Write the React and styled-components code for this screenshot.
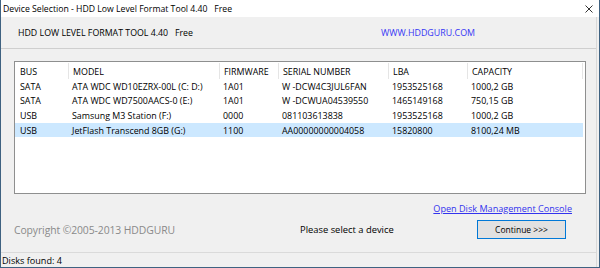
import React from "react";
import styled, { createGlobalStyle } from "styled-components";

const Global = createGlobalStyle`
  html, body { margin: 0; padding: 0; background: #f0f0f0; }
  body { font-family: "Open Sans", "Noto Sans", "Liberation Sans", sans-serif; }
  * { box-sizing: border-box; }
`;

const Window = styled.div`
  width: 600px;
  height: 268px;
  display: flex;
  flex-direction: column;
  background: #f0f0f0;
  border-left: 1px solid #3f6281;
  border-right: 1px solid #3f6281;
  border-bottom: 1px solid #3f6281;
  font-size: 9px;
  color: #000;
`;

const TitleBar = styled.div`
  height: 17px;
  flex: none;
  background: #fff;
  display: flex;
  align-items: center;
  padding: 0 6px 0 2px;
  font-size: 8.7px;
`;

const TitleText = styled.span`
  flex: 1;
  white-space: pre;
`;

const Close = styled.svg`
  width: 8px;
  height: 8px;
`;

const Body = styled.div`
  flex: 1;
  display: flex;
  flex-direction: column;
  margin-right: 2px;
  border-right: 1px solid #d9d9d9;
`;

const Header = styled.div`
  height: 32px;
  flex: none;
  display: grid;
  grid-template-columns: 363px auto;
  align-items: center;
  padding-left: 17px;
  border-bottom: 1px solid #cfcfcf;
  font-size: 8.8px;
`;

const HeaderTitle = styled.span`
  white-space: pre;
`;

const SiteLink = styled.span`
  color: #3535f5;
  font-size: 8.9px;
`;

const Main = styled.div`
  flex: 1;
  display: flex;
  flex-direction: column;
  padding: 12px 10px 0 13px;
`;

const ListBox = styled.div`
  height: 133px;
  background: #fff;
  border: 1px solid #8e8f8f;
  padding-top: 1px;
  font-size: 8.9px;
`;

const cols = "53px 151px 59px 110px 79px 1fr";

const Row = styled.div`
  display: grid;
  grid-template-columns: ${cols};
  height: ${(p) => (p.$head ? 16 : 14.6)}px;
  align-items: center;
  margin-right: 2px;
  background: ${(p) => (p.$selected ? "#cce8ff" : "transparent")};
`;

const Cell = styled.div`
  padding-left: ${(p) => (p.$first ? 5 : 4)}px;
  white-space: nowrap;
  height: 100%;
  display: flex;
  align-items: center;
  border-left: ${(p) => (p.$head && !p.$first ? "1px solid #e5e5e5" : "none")};
  border-right: ${(p) => (p.$head && p.$last ? "1px solid #e5e5e5" : "none")};
`;

const LinkRow = styled.div`
  display: flex;
  justify-content: flex-end;
  padding-right: 14px;
  margin-top: 7px;
  height: 14px;
  align-items: center;
`;

const Link = styled.span`
  color: #3333ee;
  text-decoration: underline;
  font-size: 9.1px;
`;

const Footer = styled.div`
  display: grid;
  grid-template-columns: 286px 177px 89px;
  align-items: center;
  margin-top: 5px;
  height: 19px;
`;

const Copyright = styled.span`
  color: #8a8a8a;
  font-size: 10.4px;
  letter-spacing: -0.1px;
`;

const Status = styled.span`
  font-size: 9.4px;
`;

const Button = styled.div`
  height: 19px;
  border: 1px solid #0078d7;
  background: #e1e1e1;
  display: flex;
  align-items: center;
  justify-content: center;
  font-size: 8.5px;
`;

const StatusBar = styled.div`
  height: 15px;
  flex: none;
  border-top: 1px solid #dadada;
  display: flex;
  align-items: center;
  padding-left: 1px;
  font-size: 9.1px;
`;

const data = [
  ["SATA", "ATA WDC WD10EZRX-00L (C: D:)", "1A01", "W -DCW4C3JUL6FAN", "1953525168", "1000,2 GB"],
  ["SATA", "ATA WDC WD7500AACS-0 (E:)", "1A01", "W -DCWUA04539550", "1465149168", "750,15 GB"],
  ["USB", "Samsung M3 Station (F:)", "0000", "081103613838", "1953525168", "1000,2 GB"],
  ["USB", "JetFlash Transcend 8GB (G:)", "1100", "AA00000000004058", "15820800", "8100,24 MB"],
];

const heads = ["BUS", "MODEL", "FIRMWARE", "SERIAL NUMBER", "LBA", "CAPACITY"];

export default function App() {
  return (
    <>
      <Global />
      <Window>
        <TitleBar>
          <TitleText>{"Device Selection - HDD Low Level Format Tool 4.40   Free"}</TitleText>
          <Close viewBox="0 0 8 8">
            <path d="M0.5 0.5 L7.5 7.5 M7.5 0.5 L0.5 7.5" stroke="#333" strokeWidth="1" />
          </Close>
        </TitleBar>
        <Body>
          <Header>
            <HeaderTitle>{"HDD LOW LEVEL FORMAT TOOL 4.40   Free"}</HeaderTitle>
            <SiteLink>WWW.HDDGURU.COM</SiteLink>
          </Header>
          <Main>
            <ListBox>
              <Row $head>
                {heads.map((h, i) => (
                  <Cell key={h} $head $first={i === 0} $last={i === heads.length - 1}>
                    {h}
                  </Cell>
                ))}
              </Row>
              {data.map((r, ri) => (
                <Row key={ri} $selected={ri === 3}>
                  {r.map((c, i) => (
                    <Cell key={i} $first={i === 0}>
                      {c}
                    </Cell>
                  ))}
                </Row>
              ))}
            </ListBox>
            <LinkRow>
              <Link>Open Disk Management Console</Link>
            </LinkRow>
            <Footer>
              <Copyright>Copyright ©2005-2013 HDDGURU</Copyright>
              <Status>Please select a device</Status>
              <Button>Continue &gt;&gt;&gt;</Button>
            </Footer>
          </Main>
          <StatusBar>Disks found: 4</StatusBar>
        </Body>
      </Window>
    </>
  );
}
